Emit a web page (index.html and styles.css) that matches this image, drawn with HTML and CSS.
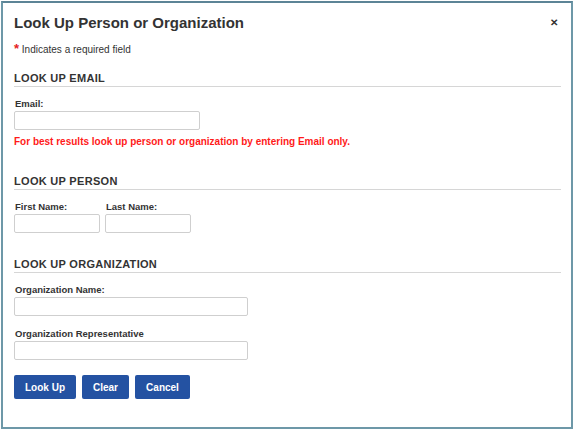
FILE: index.html
```html
<!DOCTYPE html>
<html>
<head>
<meta charset="utf-8">
<link rel="stylesheet" href="styles.css">
</head>
<body>
<div class="dialog">
  <div class="header">
    <h1 class="title">Look Up Person or Organization</h1>
    <span class="close">&#x2715;</span>
  </div>
  <p class="required"><span class="star">*</span> Indicates a required field</p>

  <section class="section">
    <h2 class="section-title">LOOK UP EMAIL</h2>
    <div class="field">
      <label class="label">Email:</label>
      <input class="input w-email" type="text">
    </div>
    <p class="hint">For best results look up person or organization by entering Email only.</p>
  </section>

  <section class="section section-person">
    <h2 class="section-title">LOOK UP PERSON</h2>
    <div class="row">
      <div class="field">
        <label class="label">First Name:</label>
        <input class="input w-name" type="text">
      </div>
      <div class="field">
        <label class="label">Last Name:</label>
        <input class="input w-name" type="text">
      </div>
    </div>
  </section>

  <section class="section section-org">
    <h2 class="section-title">LOOK UP ORGANIZATION</h2>
    <div class="field">
      <label class="label">Organization Name:</label>
      <input class="input w-org" type="text">
    </div>
    <div class="field field-rep">
      <label class="label">Organization Representative</label>
      <input class="input w-org" type="text">
    </div>
  </section>

  <div class="buttons">
    <button class="btn btn-lookup">Look Up</button>
    <button class="btn btn-clear">Clear</button>
    <button class="btn btn-cancel">Cancel</button>
  </div>
</div>
</body>
</html>
```
FILE: styles.css
```css
html, body {
  margin: 0;
  padding: 0;
  background: #ffffff;
}
body {
  font-family: "Liberation Sans", Arial, sans-serif;
  color: #333333;
  padding: 1px 1px 0 1px;
}
.dialog {
  box-sizing: border-box;
  width: 572px;
  height: 428px;
  border: 2px solid #6d98a8;
  border-top-color: #5c8496;
  background: #ffffff;
  padding: 0 10px 0 11px;
}
.header {
  display: flex;
  justify-content: space-between;
  align-items: center;
  height: 38px;
  padding-top: 1px;
  box-sizing: border-box;
}
.title {
  margin: 0;
  font-size: 15px;
  font-weight: bold;
  color: #333333;
  line-height: 18px;
}
.close {
  font-size: 10px;
  font-weight: bold;
  color: #333;
  padding-right: 3px;
  line-height: 12px;
}
.required {
  margin: 0;
  font-size: 10px;
  color: #333;
  height: 16px;
  line-height: 16px;
}
.star {
  color: #e52222;
  font-weight: bold;
  font-size: 13px;
}
.section {
  margin-top: 15px;
}
.section-title {
  margin: 0;
  font-size: 11px;
  font-weight: bold;
  letter-spacing: 0.3px;
  color: #333333;
  padding-bottom: 2px;
  border-bottom: 1px solid #d6d6d6;
  line-height: 12px;
}
.field {
  display: flex;
  flex-direction: column;
}
.label {
  font-size: 9.5px;
  font-weight: bold;
  color: #333;
  margin-top: 11px;
  line-height: 12px;
  padding-left: 1px;
}
.input {
  box-sizing: border-box;
  height: 19px;
  border: 1px solid #cfcfcf;
  border-radius: 2px;
  margin-top: 1px;
  padding: 0;
  background: #fff;
}
.w-email { width: 186px; }
.w-name { width: 86px; }
.w-org { width: 234px; }
.row {
  display: flex;
  gap: 5px;
}
.hint {
  margin: 6px 0 0 0;
  font-size: 10px;
  font-weight: bold;
  color: #ff1a1a;
  line-height: 12px;
}
.section-person {
  margin-top: 27px;
}
.section-org {
  margin-top: 25px;
}
.field-rep .label {
  margin-top: 12px;
}
.buttons {
  display: flex;
  gap: 6px;
  margin-top: 15px;
}
.btn {
  box-sizing: border-box;
  height: 24px;
  border: none;
  border-radius: 2px;
  background: #2452a2;
  color: #ffffff;
  font-family: "Liberation Sans", Arial, sans-serif;
  font-size: 10px;
  font-weight: bold;
  padding: 0;
}
.btn-lookup { width: 62px; }
.btn-clear { width: 47px; }
.btn-cancel { width: 55px; }
```
